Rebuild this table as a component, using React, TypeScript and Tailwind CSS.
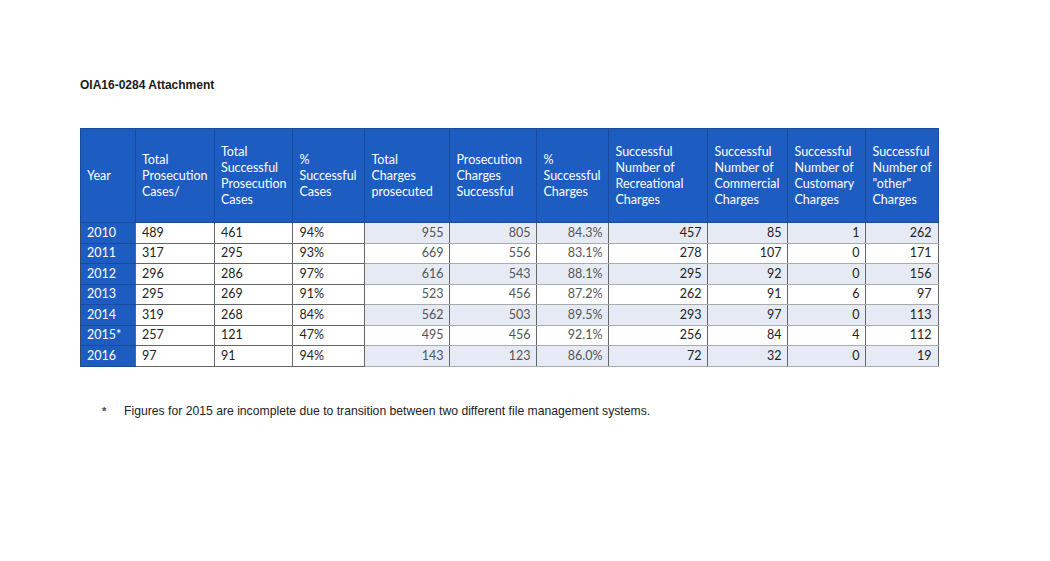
import React from 'react';

// table data from the attachment
const rows = [
  { year: '2010', cases: '489', success: '461', pct: '94%', charges: '955', chargesOk: '805', chargesPct: '84.3%', rec: '457', com: '85', cus: '1', other: '262' },
  { year: '2011', cases: '317', success: '295', pct: '93%', charges: '669', chargesOk: '556', chargesPct: '83.1%', rec: '278', com: '107', cus: '0', other: '171' },
  { year: '2012', cases: '296', success: '286', pct: '97%', charges: '616', chargesOk: '543', chargesPct: '88.1%', rec: '295', com: '92', cus: '0', other: '156' },
  { year: '2013', cases: '295', success: '269', pct: '91%', charges: '523', chargesOk: '456', chargesPct: '87.2%', rec: '262', com: '91', cus: '6', other: '97' },
  { year: '2014', cases: '319', success: '268', pct: '84%', charges: '562', chargesOk: '503', chargesPct: '89.5%', rec: '293', com: '97', cus: '0', other: '113' },
  { year: '2015*', cases: '257', success: '121', pct: '47%', charges: '495', chargesOk: '456', chargesPct: '92.1%', rec: '256', com: '84', cus: '4', other: '112' },
  { year: '2016', cases: '97', success: '91', pct: '94%', charges: '143', chargesOk: '123', chargesPct: '86.0%', rec: '72', com: '32', cus: '0', other: '19' },
];

const headers = [
  { w: 'w-[55px]', lines: ['Year'] },
  { w: 'w-[79px]', lines: ['Total', 'Prosecution', 'Cases/'] },
  { w: 'w-[78px]', lines: ['Total', 'Successful', 'Prosecution', 'Cases'] },
  { w: 'w-[72px]', lines: ['%', 'Successful', 'Cases'] },
  { w: 'w-[85px]', lines: ['Total', 'Charges', 'prosecuted'] },
  { w: 'w-[87px]', lines: ['Prosecution', 'Charges', 'Successful'] },
  { w: 'w-[72px]', lines: ['%', 'Successful', 'Charges'] },
  { w: 'w-[99px]', lines: ['Successful', 'Number of', 'Recreational', 'Charges'] },
  { w: 'w-[80px]', lines: ['Successful', 'Number of', 'Commercial', 'Charges'] },
  { w: 'w-[78px]', lines: ['Successful', 'Number of', 'Customary', 'Charges'] },
  { w: 'w-[72px]', lines: ['Successful', 'Number of', '"other"', 'Charges'] },
];

const App = () => {
  return (
    <div className="w-[1050px] h-[561px] bg-white pt-[77px] pl-[80px] font-['Liberation_Sans',Arial,sans-serif]">
      <h1 className="text-[12px] font-bold text-[#1a1a1a] leading-4">OIA16-0284 Attachment</h1>

      <table className="mt-[35px] border-collapse table-fixed font-['Lato','Open_Sans',sans-serif] text-[12.5px] border border-[#3a4a66]">
        <thead>
          <tr className="h-[94px] bg-[#1d5dc2] text-white">
            {headers.map((h, i) => (
              <th key={i} className={`${h.w} px-[6px] text-left align-middle font-normal leading-4 border border-[#1a4a99]`}>
                {h.lines.map((l, j) => (
                  <div key={j} className="whitespace-nowrap">{l}</div>
                ))}
              </th>
            ))}
          </tr>
        </thead>
        <tbody>
          {rows.map((r, i) => {
            const shade = i % 2 === 0 ? 'bg-[#e5eaf5]' : 'bg-white';
            return (
              <tr key={r.year} className="h-[20.5px] leading-4">
                <td className="px-[6px] bg-[#1d5dc2] text-white border-y border-[#1a4a99]">{r.year}</td>
                <td className="px-[6px] bg-white text-[#222] border border-[#666]">{r.cases}</td>
                <td className="px-[6px] bg-white text-[#222] border border-[#666]">{r.success}</td>
                <td className="px-[6px] bg-white text-[#222] border border-[#666]">{r.pct}</td>
                <td className={`px-[6px] ${shade} text-right text-[#555] border-x border-x-[#666] border-y border-y-[#aaa]`}>{r.charges}</td>
                <td className={`px-[6px] ${shade} text-right text-[#555] border-x border-x-[#666] border-y border-y-[#aaa]`}>{r.chargesOk}</td>
                <td className={`px-[6px] ${shade} text-right text-[#555] border-x border-x-[#666] border-y border-y-[#aaa]`}>{r.chargesPct}</td>
                <td className={`px-[6px] ${shade} text-right text-[#222] border-x border-x-[#666] border-y border-y-[#aaa]`}>{r.rec}</td>
                <td className={`px-[6px] ${shade} text-right text-[#222] border-x border-x-[#666] border-y border-y-[#aaa]`}>{r.com}</td>
                <td className={`px-[6px] ${shade} text-right text-[#222] border-x border-x-[#666] border-y border-y-[#aaa]`}>{r.cus}</td>
                <td className={`px-[6px] ${shade} text-right text-[#222] border-x border-x-[#666] border-y border-y-[#aaa]`}>{r.other}</td>
              </tr>
            );
          })}
        </tbody>
      </table>

      <div className="mt-[36px] flex items-center text-[12.2px] text-[#222] leading-4">
        <span className="w-[44px] pl-[22px] text-[11px] font-bold text-[#444]">*</span>
        <span>Figures for 2015 are incomplete due to transition between two different file management systems.</span>
      </div>
    </div>
  );
};

export default App;
